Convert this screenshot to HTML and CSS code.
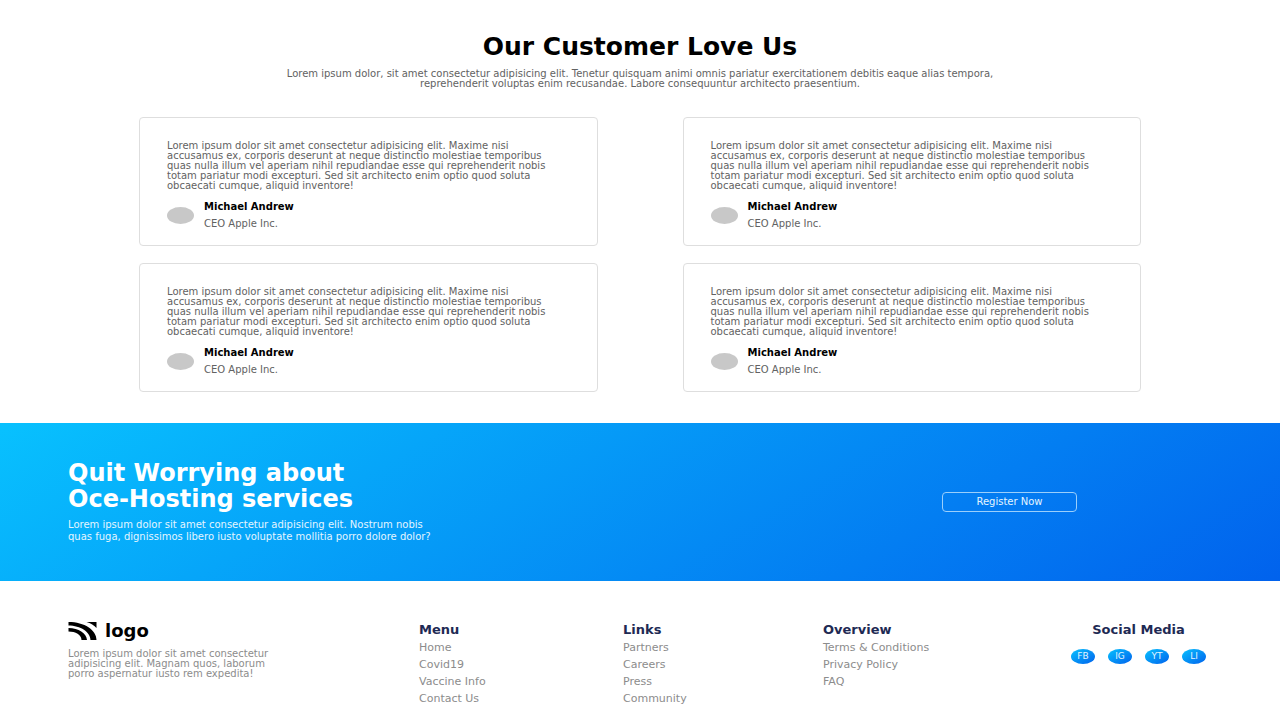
FILE: index.html
```html
<!DOCTYPE html>
<html lang="en">
<head>
<meta charset="utf-8">
<meta name="viewport" content="width=device-width, initial-scale=1">
<title>Oce-Hosting</title>
<link rel="stylesheet" href="styles.css">
</head>
<body>
<main>
  <section class="customers">
    <h2 class="customers-title">Our Customer Love Us</h2>
    <p class="customers-intro">Lorem ipsum dolor, sit amet consectetur adipisicing elit. Tenetur quisquam animi omnis pariatur exercitationem debitis eaque alias tempora, reprehenderit voluptas enim recusandae. Labore consequuntur architecto praesentium.</p>
    <div class="card-grid">
      <article class="card">
        <p class="quote">Lorem ipsum dolor sit amet consectetur adipisicing elit. Maxime nisi<br>accusamus ex, corporis deserunt at neque distinctio molestiae temporibus<br>quas nulla illum vel aperiam nihil repudiandae esse qui reprehenderit nobis<br>totam pariatur modi excepturi. Sed sit architecto enim optio quod soluta<br>obcaecati cumque, aliquid inventore!</p>
        <div class="person"><span class="avatar"></span><div><h3 class="name">Michael Andrew</h3><p class="role">CEO Apple Inc.</p></div></div>
      </article>
      <article class="card">
        <p class="quote">Lorem ipsum dolor sit amet consectetur adipisicing elit. Maxime nisi<br>accusamus ex, corporis deserunt at neque distinctio molestiae temporibus<br>quas nulla illum vel aperiam nihil repudiandae esse qui reprehenderit nobis<br>totam pariatur modi excepturi. Sed sit architecto enim optio quod soluta<br>obcaecati cumque, aliquid inventore!</p>
        <div class="person"><span class="avatar"></span><div><h3 class="name">Michael Andrew</h3><p class="role">CEO Apple Inc.</p></div></div>
      </article>
      <article class="card">
        <p class="quote">Lorem ipsum dolor sit amet consectetur adipisicing elit. Maxime nisi<br>accusamus ex, corporis deserunt at neque distinctio molestiae temporibus<br>quas nulla illum vel aperiam nihil repudiandae esse qui reprehenderit nobis<br>totam pariatur modi excepturi. Sed sit architecto enim optio quod soluta<br>obcaecati cumque, aliquid inventore!</p>
        <div class="person"><span class="avatar"></span><div><h3 class="name">Michael Andrew</h3><p class="role">CEO Apple Inc.</p></div></div>
      </article>
      <article class="card">
        <p class="quote">Lorem ipsum dolor sit amet consectetur adipisicing elit. Maxime nisi<br>accusamus ex, corporis deserunt at neque distinctio molestiae temporibus<br>quas nulla illum vel aperiam nihil repudiandae esse qui reprehenderit nobis<br>totam pariatur modi excepturi. Sed sit architecto enim optio quod soluta<br>obcaecati cumque, aliquid inventore!</p>
        <div class="person"><span class="avatar"></span><div><h3 class="name">Michael Andrew</h3><p class="role">CEO Apple Inc.</p></div></div>
      </article>
    </div>
  </section>
  <section class="banner">
    <div>
      <h2 class="banner-title">Quit Worrying about<br>Oce-Hosting services</h2>
      <p class="banner-text">Lorem ipsum dolor sit amet consectetur adipisicing elit. Nostrum nobis<br>quas fuga, dignissimos libero iusto voluptate mollitia porro dolore dolor?</p>
    </div>
    <button class="register" type="button">Register Now</button>
  </section>
</main>
<footer class="footer">
  <div>
    <a class="logo" href="#">
      <svg class="logo-mark" viewBox="0 0 28 18" aria-hidden="true">
        <path d="M0 0C16 0 28 8 28 18H22C22 10 12 3.4 0 3.4ZM0 6C10 6 18 11 18.5 18H13C13 13 7 9.6 0 9.6ZM18 0H28V6C26 3.5 22 1 18 0Z"/>
      </svg>
      <span>logo</span>
    </a>
    <p class="about">Lorem ipsum dolor sit amet consectetur<br>adipisicing elit. Magnam quos, laborum<br>porro aspernatur iusto rem expedita!</p>
  </div>
  <nav aria-labelledby="menu"><h3 class="foot-title" id="menu">Menu</h3><ul class="links"><li><a href="#">Home</a></li><li><a href="#">Covid19</a></li><li><a href="#">Vaccine Info</a></li><li><a href="#">Contact Us</a></li></ul></nav>
  <nav aria-labelledby="links"><h3 class="foot-title" id="links">Links</h3><ul class="links"><li><a href="#">Partners</a></li><li><a href="#">Careers</a></li><li><a href="#">Press</a></li><li><a href="#">Community</a></li></ul></nav>
  <nav aria-labelledby="overview"><h3 class="foot-title" id="overview">Overview</h3><ul class="links"><li><a href="#">Terms &amp; Conditions</a></li><li><a href="#">Privacy Policy</a></li><li><a href="#">FAQ</a></li></ul></nav>
  <div class="social">
    <h3 class="foot-title">Social Media</h3>
    <div class="badges"><a href="#">FB</a><a href="#">IG</a><a href="#">YT</a><a href="#">LI</a></div>
  </div>
</footer>
</body>
</html>
```
FILE: styles.css
```css
* { box-sizing: border-box; margin: 0; padding: 0; }
body { font: 10px/10px "DejaVu Sans", sans-serif; color: #626262; background: #fff; }
a { color: inherit; text-decoration: none; }

.customers { padding: 34px 139px 31px; }
.customers-title { font-size: 25px; line-height: 26px; color: #000; text-align: center; }
.customers-intro { max-width: 760px; margin: 9px auto 28px; text-align: center; }
.card-grid { display: grid; grid-template-columns: 1fr 1fr; gap: 17px 85px; }
.card { padding: 23px 27px 16px; border: 1px solid #dedede; border-radius: 4px; white-space: nowrap; }
.person { display: flex; align-items: center; gap: 10px; margin-top: 10px; }
.avatar { width: 27px; height: 17px; border-radius: 50%; background: #c8c8c8; }
.name { font-size: 10px; line-height: 11px; color: #000; }
.role { margin-top: 6px; line-height: 11px; }

.banner { display: grid; grid-template-columns: 1fr 135px; align-items: center; padding: 37px 203px 38px 68px; color: #fff; background: linear-gradient(149deg, #08c1fe, #0162ed); }
.banner-title { font-size: 24px; line-height: 26px; }
.banner-text { margin-top: 7px; line-height: 12px; color: #e4f5ff; }
.register { height: 20px; border: 1px solid #9bcffb; border-radius: 4px; background: transparent; color: #e4f5ff; font: inherit; }

.footer { display: grid; grid-template-columns: 351fr 204fr 200fr 248fr 135fr; padding: 41px 74px 15px 68px; color: #8c8c8c; }
.logo { display: flex; align-items: center; gap: 8px; color: #000; font-size: 18px; line-height: 18px; font-weight: bold; }
.logo-mark { width: 29px; height: 18px; }
.about { margin-top: 9px; white-space: nowrap; }
.foot-title { font-size: 13px; line-height: 16px; color: #1e2a54; }
.links { margin-top: 1px; list-style: none; font-size: 11px; line-height: 17px; }
.social { text-align: center; }
.badges { display: flex; justify-content: space-between; margin-top: 11px; }
.badges a { width: 24px; height: 15px; border-radius: 50%; color: #e4f5ff; font-size: 9px; line-height: 15px; background: linear-gradient(to bottom right, #08c1fe, #0162ed); }
```
